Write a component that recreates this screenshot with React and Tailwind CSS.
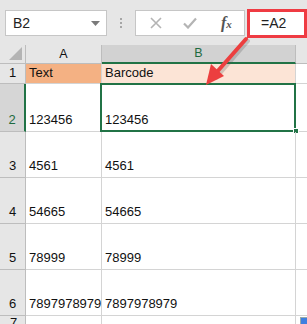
const rows = [
  { n: 2, a: "123456", b: "123456", h: "h-[48px]" },
  { n: 3, a: "4561", b: "4561", h: "h-[46px]" },
  { n: 4, a: "54665", b: "54665", h: "h-[46px]" },
  { n: 5, a: "78999", b: "78999", h: "h-[46px]" },
  { n: 6, a: "7897978979", b: "7897978979", h: "h-[46px]" },
];

function FormulaBar() {
  return (
    <div className="flex h-[45px] items-center bg-[#e6e6e6] pt-[1px]">
      <div className="ml-[5px] flex h-[26px] w-[102px] items-center justify-between border border-[#c6c6c6] bg-white pl-[7px] pr-[6px] text-[14px] text-[#222]">
        <span>B2</span>
        <svg width="9" height="5" viewBox="0 0 9 5">
          <path d="M0 0h9L4.5 5z" fill="#7a7a7a" />
        </svg>
      </div>
      <div className="ml-[13px] flex w-[3px] flex-col gap-[2px]">
        <span className="h-[2px] w-[2px] bg-[#a6a6a6]" />
        <span className="h-[2px] w-[2px] bg-[#a6a6a6]" />
        <span className="h-[2px] w-[2px] bg-[#a6a6a6]" />
      </div>
      <div className="ml-[12px] flex h-[26px] w-[110px] items-center border border-[#c6c6c6] bg-white">
        <svg className="ml-[14px]" width="12" height="12" viewBox="0 0 12 12">
          <path d="M1 1l10 10M11 1L1 11" stroke="#b4b4b4" strokeWidth="1.6" />
        </svg>
        <svg className="ml-[21px]" width="14" height="12" viewBox="0 0 14 12">
          <path d="M1 6.5l4 4L13 1.5" stroke="#b4b4b4" strokeWidth="2.2" fill="none" />
        </svg>
        <span className="ml-[24px] font-['Liberation_Serif'] text-[16px] font-bold italic text-[#555]">
          f<span className="text-[11px]">x</span>
        </span>
      </div>
      <div className="ml-[2px] flex h-[29px] flex-1 items-center border-[3px] border-[#ef3b43] bg-white pl-[11px] text-[14px] text-[#222]">
        =A2
      </div>
    </div>
  );
}

export default function App() {
  return (
    <div className="relative h-[324px] w-[307px] overflow-hidden bg-white font-['Liberation_Sans'] text-[#111]">
      <FormulaBar />

      <div className="grid grid-cols-[26px_76px_194px_1fr] text-[13px]">
        {/* column headers */}
        <div className="relative h-[19px] border-b border-r border-[#bdbdbd] bg-[#e6e6e6]">
          <svg className="absolute bottom-[3px] right-[3px]" width="13" height="13" viewBox="0 0 13 13">
            <path d="M13 0v13H0z" fill="#b4b4b4" />
          </svg>
        </div>
        <div className="flex h-[19px] items-center justify-center border-b border-r border-[#bdbdbd] bg-[#e6e6e6] text-[12.5px]">
          A
        </div>
        <div className="flex h-[19px] items-center justify-center border-b-2 border-r border-b-[#217346] border-r-[#bdbdbd] bg-[#d2d2d2] text-[12.5px] text-[#1e6b3f]">
          B
        </div>
        <div className="h-[19px] border-b border-[#bdbdbd] bg-[#e6e6e6]" />

        {/* row 1 */}
        <div className="flex h-[20px] items-end justify-center border-b border-r border-[#bdbdbd] bg-[#e6e6e6] pb-[1px]">1</div>
        <div className="flex h-[20px] items-end border-b border-r border-[#d4d4d4] bg-[#f4b183] pb-[1px] pl-[3px]">Text</div>
        <div className="flex h-[20px] items-end border-b border-r border-[#d4d4d4] bg-[#fce4d6] pb-[1px] pl-[3px]">Barcode</div>
        <div className="h-[20px] border-b border-[#d4d4d4]" />

        {rows.map((r) => {
          const sel = r.n === 2;
          return [
            <div
              key={r.n + "h"}
              className={`flex ${r.h} items-end justify-center border-b border-[#bdbdbd] pb-[2px] ${
                sel ? "border-r-2 border-r-[#217346] bg-[#d6d6d6] text-[#1e6b3f]" : "border-r bg-[#e6e6e6]"
              }`}
            >
              {r.n}
            </div>,
            <div key={r.n + "a"} className={`flex ${r.h} items-end whitespace-nowrap border-b border-r border-[#d4d4d4] pb-[2px] pl-[3px]`}>
              {r.a}
            </div>,
            <div key={r.n + "b"} className={`relative flex ${r.h} items-end border-b border-r border-[#d4d4d4] pb-[2px] pl-[3px]`}>
              {r.b}
              {sel && (
                <>
                  <div className="absolute -left-[2px] -top-[1px] bottom-[-1px] right-[-1px] border-2 border-[#217346]" />
                  <div className="absolute -bottom-[3px] -right-[4px] h-[6px] w-[6px] border border-white bg-[#217346]" />
                </>
              )}
            </div>,
            <div key={r.n + "c"} className={`${r.h} border-b border-[#d4d4d4]`} />,
          ];
        })}

        <div className="h-[20px] border-r border-[#bdbdbd] bg-[#e6e6e6] pl-[10px] leading-[14px]">7</div>
        <div className="h-[20px] border-r border-[#d4d4d4]" />
        <div className="h-[20px] border-r border-[#d4d4d4]" />
        <div className="h-[20px]" />
      </div>

      <svg className="pointer-events-none absolute left-0 top-0" width="307" height="324" viewBox="0 0 307 324">
        <g transform="translate(2 2)" opacity="0.25">
          <path d="M246 39L214 76" stroke="#555" strokeWidth="4" strokeLinecap="round" />
        </g>
        <path d="M246 39L216 73" stroke="#ec3f3f" strokeWidth="4" strokeLinecap="round" />
        <path d="M206 85L224 76L211 64z" fill="#ec3f3f" />
      </svg>
      <div className="absolute left-[300px] top-[317px] h-[8px] w-[8px] border border-[#9aa] bg-[#3f7fe0]" />
    </div>
  );
}
